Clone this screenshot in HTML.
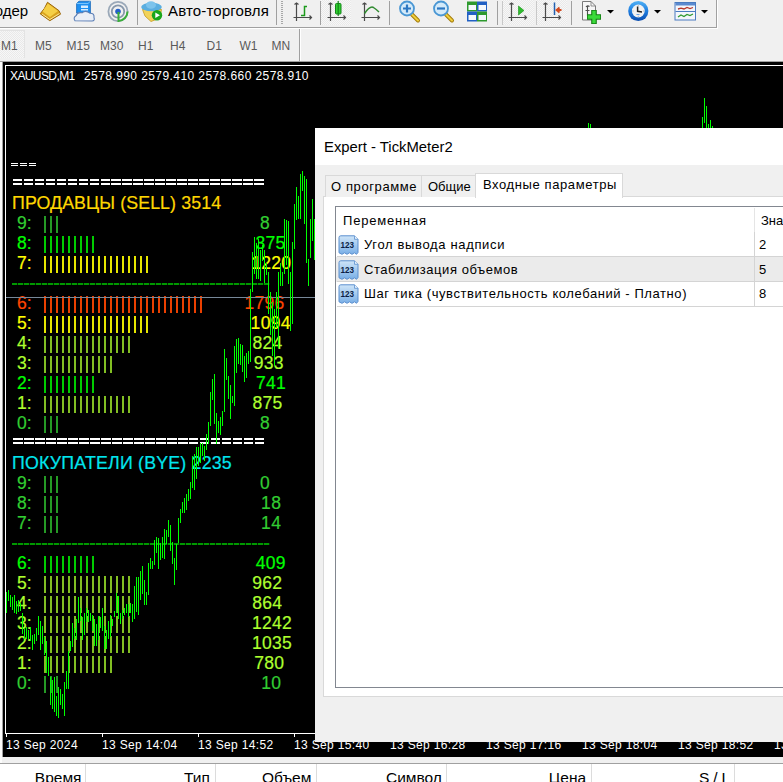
<!DOCTYPE html>
<html><head><meta charset="utf-8">
<style>
*{margin:0;padding:0;box-sizing:border-box}
html,body{width:783px;height:782px;overflow:hidden;background:#f0f0f0;font-family:"Liberation Sans",sans-serif;position:relative}
.a{position:absolute}
.vsep{position:absolute;width:1px;background:#a0a0a0}
.chk{position:absolute;background-color:#f7f7f7;background-image:linear-gradient(45deg,#e9e9e9 25%,transparent 25%,transparent 75%,#e9e9e9 75%),linear-gradient(45deg,#e9e9e9 25%,transparent 25%,transparent 75%,#e9e9e9 75%);background-size:2px 2px;background-position:0 0,1px 1px}
.tf{position:absolute;top:39px;font-size:12px;color:#5a5a5a;line-height:14px;white-space:pre}
.tl{position:absolute;top:738px;font-size:12px;color:#fff;line-height:14px;white-space:pre;letter-spacing:0.35px}
.tick{position:absolute;top:733px;width:1px;height:4px;background:#fff}
.lab{position:absolute;font-size:17.5px;line-height:17px;white-space:pre;-webkit-text-stroke:0.2px currentColor}
.pipe{position:absolute;width:2px;height:17px;opacity:0.75}
.hd{position:absolute;top:769.7px;font-size:15.5px;color:#000;line-height:16px;white-space:pre}
.csep{position:absolute;top:764px;width:1px;height:18px;background:#dcdcdc}
.dt{position:absolute;font-size:13px;color:#000;line-height:16px;white-space:pre}
</style></head><body>

<!-- ===== toolbar ===== -->
<div class="a" style="left:0;top:28px;width:718px;height:1px;background:#fff"></div>
<div class="a" style="left:717px;top:0;width:1px;height:29px;background:#fff"></div>
<div class="a" style="left:0;top:27px;width:717px;height:1px;background:#a0a0a0"></div>
<div class="a" style="left:716px;top:0;width:1px;height:28px;background:#a0a0a0"></div>
<div class="a" style="left:-17px;top:2px;font-size:15px;line-height:17px;color:#000;white-space:pre">Ордер</div>

<!-- book icon -->
<svg class="a" style="left:38px;top:0" width="26" height="24" viewBox="0 0 26 24">
<path d="M9.5 2.3 L21 10.7 L22.5 14.2 L11.8 20.7 L2.2 13.8 L6.4 8.4 Z" fill="#d9a21c" stroke="#9a6508" stroke-width="1"/>
<path d="M9.8 3.5 L20 11 L12 17 L4.5 11.5 Z" fill="#f5cf45"/>
<path d="M4 14 L11.8 19.5 L21.5 13.5" fill="none" stroke="#fbe9a0" stroke-width="1"/>
</svg>
<!-- server cloud -->
<svg class="a" style="left:72px;top:0" width="26" height="24" viewBox="0 0 26 24">
<path d="M4.6 3.5 L7 1.2 H18.4 V13 H4.6 Z" fill="#1e8ff0" stroke="#1566b8" stroke-width="0.8"/>
<path d="M4.6 3.5 H16 L18.4 1.2" fill="none" stroke="#8fd0ff" stroke-width="0.8"/>
<rect x="9" y="5.5" width="7" height="2.5" fill="#d5ecff"/>
<rect x="9" y="9" width="7" height="1.5" fill="#d5ecff"/>
<path d="M3 20.8 Q0.8 17.5 4.2 15.6 Q5 11.8 10 12.8 Q14 9.8 17.8 13.2 Q22.5 13 22 17.5 Q23.2 20.8 20 21 Z" fill="#e9eef6" stroke="#5a7db5" stroke-width="1.1"/>
</svg>
<!-- signal -->
<svg class="a" style="left:106px;top:0" width="26" height="24" viewBox="0 0 26 24">
<circle cx="12" cy="11.5" r="9.6" fill="none" stroke="#9aa8b8" stroke-width="1.8"/>
<circle cx="12" cy="11.5" r="6.2" fill="none" stroke="#8797ab" stroke-width="1.8"/>
<circle cx="12" cy="11.5" r="2.8" fill="#2360c8"/>
<path d="M12.5 12 V21 A9.5 9.5 0 0 0 21.5 11.5" fill="none" stroke="#3aae3a" stroke-width="2"/>
</svg>

<!-- auto trading button -->
<div class="a" style="left:137px;top:0;width:1px;height:25px;background:#a0a0a0"></div>
<div class="a" style="left:276px;top:0;width:1px;height:25px;background:#a0a0a0"></div>
<svg class="a" style="left:139px;top:0" width="26" height="24" viewBox="0 0 26 24">
<path d="M3.5 9.5 L6 16 L12 21.5 L21 18 L22.5 9.5 Z" fill="#f2d35a" stroke="#c49a1e" stroke-width="0.8"/>
<ellipse cx="12.5" cy="7" rx="10.3" ry="4.3" fill="#5aaee0"/>
<ellipse cx="12" cy="5" rx="5" ry="3.8" fill="#7cc3ec"/>
<circle cx="18" cy="15.3" r="5.2" fill="#1aa61a"/>
<path d="M16.3 12.5 L21 15.3 L16.3 18.1 Z" fill="#fff"/>
</svg>
<div class="a" style="left:168px;top:2px;font-size:15px;line-height:17px;color:#000;white-space:pre;letter-spacing:0.15px">Авто-торговля</div>
<!-- gripper -->
<div class="a" style="left:281px;top:1px;width:2px;height:24px;background:repeating-linear-gradient(#a8a8a8 0 1px,#f0f0f0 1px 2px)"></div>

<!-- chart type buttons -->
<div class="chk" style="left:321px;top:0;width:30px;height:25px"></div>
<svg class="a" style="left:290px;top:0" width="100" height="25" viewBox="0 0 100 25">
 <g stroke="#4a4a4a" stroke-width="1.2" fill="none">
  <path d="M6.5 3.5 V21 M3.5 17.5 H21 M4.5 4.5 L6.5 3 L8.5 4.5 M19.5 15.5 L21.5 17.5 L19.5 19.5"/>
  <path d="M40.5 3.5 V21 M37.5 17.5 H55 M38.5 4.5 L40.5 3 L42.5 4.5 M53.5 15.5 L55.5 17.5 L53.5 19.5"/>
  <path d="M74.5 3.5 V21 M71.5 17.5 H89 M72.5 4.5 L74.5 3 L76.5 4.5 M87.5 15.5 L89.5 17.5 L87.5 19.5"/>
 </g>
 <path d="M11 15.5 H14.5 V6.5 H17" fill="none" stroke="#1c9a1c" stroke-width="1.5"/>
 <rect x="45.5" y="3.5" width="5.5" height="10.5" rx="1" fill="#2fcf2f" stroke="#14861a"/>
 <path d="M48.2 1 V16" stroke="#14861a" stroke-width="1.2"/>
 <path d="M74.5 13.5 Q80 5.5 83.5 7.5 Q86.5 9.5 89 12" fill="none" stroke="#2f8a2f" stroke-width="1.5"/>
</svg>
<div class="vsep" style="left:320px;top:1px;height:24px"></div>
<div class="vsep" style="left:389px;top:1px;height:24px"></div>

<!-- zoom icons -->
<svg class="a" style="left:396px;top:0" width="100" height="25" viewBox="0 0 100 25">
 <path d="M16 14.5 L22 20.5" stroke="#a47c0c" stroke-width="4" stroke-linecap="round"/>
 <path d="M16 14.5 L22 20.5" stroke="#f0cf3c" stroke-width="2" stroke-linecap="round"/>
 <circle cx="11" cy="8.5" r="7" fill="#d4eaf9" stroke="#4a97d4" stroke-width="1.8"/>
 <path d="M11 4.5 V12.5 M7 8.5 H15" stroke="#2c77c2" stroke-width="2.2"/>
 <path d="M50 14.5 L56 20.5" stroke="#a47c0c" stroke-width="4" stroke-linecap="round"/>
 <path d="M50 14.5 L56 20.5" stroke="#f0cf3c" stroke-width="2" stroke-linecap="round"/>
 <circle cx="45" cy="8.5" r="7" fill="#d4eaf9" stroke="#4a97d4" stroke-width="1.8"/>
 <path d="M41 8.5 H49" stroke="#2c77c2" stroke-width="2.2"/>
 <rect x="71" y="1.5" width="10" height="10" fill="#2e9a2e"/>
 <rect x="81" y="1.5" width="10" height="10" fill="#2160c4"/>
 <rect x="71" y="11.5" width="10" height="10" fill="#2160c4"/>
 <rect x="81" y="11.5" width="10" height="10" fill="#2e9a2e"/>
 <g fill="#f4f8fc"><rect x="72.5" y="5" width="7.5" height="5"/><rect x="82.5" y="5" width="7.5" height="5"/><rect x="72.5" y="15" width="7.5" height="5"/><rect x="82.5" y="15" width="7.5" height="5"/></g>
</svg>
<div class="vsep" style="left:497px;top:1px;height:24px"></div>
<div class="chk" style="left:502px;top:0;width:32px;height:25px"></div>
<div class="chk" style="left:536px;top:0;width:31px;height:25px"></div>
<div class="vsep" style="left:502px;top:1px;height:24px;background:#c8c8c8"></div>
<div class="vsep" style="left:536px;top:1px;height:24px;background:#c8c8c8"></div>
<svg class="a" style="left:505px;top:0" width="62" height="25" viewBox="0 0 62 25">
 <g stroke="#4a4a4a" stroke-width="1.2" fill="none">
  <path d="M6.5 3.5 V21 M3.5 17.5 H21 M4.5 4.5 L6.5 3 L8.5 4.5 M19.5 15.5 L21.5 17.5 L19.5 19.5"/>
  <path d="M40.5 3.5 V21 M37.5 17.5 H55 M38.5 4.5 L40.5 3 L42.5 4.5 M53.5 15.5 L55.5 17.5 L53.5 19.5"/>
 </g>
 <path d="M13.5 6 L19 10.5 L13.5 15 Z" fill="#2dbd2d" stroke="#1a8f1a" stroke-width="0.6"/>
 <path d="M49.5 2.5 V15" stroke="#2160b0" stroke-width="1.5"/>
 <path d="M56.5 10 H52 M54.5 7.5 L51.5 10 L54.5 12.5" stroke="#d2491e" stroke-width="1.8" fill="none"/>
</svg>
<div class="vsep" style="left:571px;top:1px;height:24px"></div>

<!-- indicators / clock / templates -->
<svg class="a" style="left:580px;top:0" width="135" height="25" viewBox="0 0 135 25">
 <path d="M2.5 1.5 H11 L15.5 6 V20 H2.5 Z" fill="#f6f6f6" stroke="#7a7a7a" stroke-width="1"/>
 <path d="M11 1.5 V6 H15.5" fill="none" stroke="#7a7a7a" stroke-width="0.8"/>
 <path d="M6 7 Q7.5 5 9.5 6.5 M7.5 6 V16 M5.5 10.5 H9.5" stroke="#505050" fill="none" stroke-width="1.1"/>
 <path d="M14 10 V24 M7 17 H21" stroke="#127d12" stroke-width="5.6"/>
 <path d="M14 10.8 V23.2 M7.8 17 H20.2" stroke="#3ada3a" stroke-width="3.4"/>
 <path d="M27 10 H34 L30.5 13.5 Z" fill="#000"/>
 <defs><linearGradient id="clk" x1="0" y1="0" x2="0" y2="1"><stop offset="0" stop-color="#52b2f5"/><stop offset="0.5" stop-color="#1f7ee0"/><stop offset="1" stop-color="#0a4cae"/></linearGradient></defs>
 <circle cx="58.3" cy="11" r="10.1" fill="url(#clk)"/>
 <circle cx="58.3" cy="11" r="6.4" fill="#f2f2f2"/>
 <g stroke="#9a9a9a" stroke-width="0.8"><path d="M58.3 5.2 V6.2 M58.3 15.8 V16.8 M52.5 11 H53.5 M63.1 11 H64.1"/></g>
 <path d="M57.6 6.5 V11.3 L62 12" stroke="#222" stroke-width="1.5" fill="none"/>
 <path d="M56.5 14.5 H59.5" stroke="#4a90e0" stroke-width="0.8"/>
 <path d="M74 10 H81 L77.5 13.5 Z" fill="#000"/>
 <rect x="95" y="2.5" width="20.5" height="17.5" fill="#f3f6fb" stroke="#4a7bc0"/>
 <rect x="95.5" y="3" width="19.5" height="2.5" fill="#5a8ad0"/>
 <path d="M95.5 11.5 H115" stroke="#4a7bc0"/>
 <path d="M98 9 L101 8.2 L104 9 L107 7.5 L110 8.5 L113 7.5" stroke="#b8372a" stroke-width="1.3" fill="none"/>
 <path d="M98 17 L101 15 L104 16.5 L107 14.5 L110 15.5 L113 14" stroke="#2e9a2e" stroke-width="1.3" fill="none"/>
 <path d="M121 10 H128 L124.5 13.5 Z" fill="#000"/>
</svg>

<!-- ===== timeframe bar ===== -->
<div class="chk" style="left:0;top:30px;width:25px;height:28px;border-right:1px solid #e3e3e3;border-top:1px solid #e3e3e3"></div>
<div class="tf" style="left:1px">M1</div><div class="tf" style="left:35px">M5</div><div class="tf" style="left:66.5px">M15</div><div class="tf" style="left:100px">M30</div><div class="tf" style="left:138px">H1</div><div class="tf" style="left:170px">H4</div><div class="tf" style="left:206.5px">D1</div><div class="tf" style="left:239.5px">W1</div><div class="tf" style="left:271.5px">MN</div>
<div class="a" style="left:299px;top:29px;width:1px;height:32px;background:#a0a0a0"></div>
<div class="a" style="left:300px;top:29px;width:1px;height:32px;background:#fff"></div>

<!-- ===== chart ===== -->
<div class="a" style="left:0;top:61px;width:783px;height:1px;background:#a0a0a0"></div>
<div class="a" style="left:0;top:62px;width:2px;height:702px;background:#fcfcfc"></div>
<div class="a" style="left:2px;top:62px;width:1px;height:695px;background:#a0a0a0"></div>
<div class="a" style="left:3px;top:62px;width:780px;height:695px;background:#000"></div>
<div class="a" style="left:5px;top:65px;width:790px;height:669px;border:1px solid #fff"></div>
<div class="a" style="left:10px;top:69px;font-size:12px;line-height:14px;color:#fff;white-space:pre;letter-spacing:-0.6px">XAUUSD,M1</div><div class="a" style="left:84px;top:69px;font-size:12px;line-height:14px;color:#fff;white-space:pre;letter-spacing:0.42px">2578.990 2579.410 2578.660 2578.910</div>
<div class="tl" style="left:6px">13 Sep 2024</div><div class="tick" style="left:6px"></div><div class="tl" style="left:102px">13 Sep 14:04</div><div class="tick" style="left:102px"></div><div class="tl" style="left:198px">13 Sep 14:52</div><div class="tick" style="left:198px"></div><div class="tl" style="left:294px">13 Sep 15:40</div><div class="tick" style="left:294px"></div><div class="tl" style="left:390px">13 Sep 16:28</div><div class="tick" style="left:390px"></div><div class="tl" style="left:486px">13 Sep 17:16</div><div class="tick" style="left:486px"></div><div class="tl" style="left:582px">13 Sep 18:04</div><div class="tick" style="left:582px"></div><div class="tl" style="left:678px">13 Sep 18:52</div><div class="tick" style="left:678px"></div><div class="tl" style="left:774px">13 Sep 19:40</div><div class="tick" style="left:774px"></div>



<!-- indicator -->
<div style="position:absolute;left:11.0px;top:163px;width:7px;height:1px;background:#fff"></div>
<div style="position:absolute;left:11.0px;top:165px;width:7px;height:1px;background:#fff"></div>
<div style="position:absolute;left:20.0px;top:163px;width:7px;height:1px;background:#fff"></div>
<div style="position:absolute;left:20.0px;top:165px;width:7px;height:1px;background:#fff"></div>
<div style="position:absolute;left:29.0px;top:163px;width:7px;height:1px;background:#fff"></div>
<div style="position:absolute;left:29.0px;top:165px;width:7px;height:1px;background:#fff"></div>
<div style="position:absolute;left:12.7px;top:179px;width:9.6px;height:2px;background:#fff"></div>
<div style="position:absolute;left:12.7px;top:183px;width:9.6px;height:2px;background:#fff"></div>
<div style="position:absolute;left:23.7px;top:179px;width:9.6px;height:2px;background:#fff"></div>
<div style="position:absolute;left:23.7px;top:183px;width:9.6px;height:2px;background:#fff"></div>
<div style="position:absolute;left:34.6px;top:179px;width:9.6px;height:2px;background:#fff"></div>
<div style="position:absolute;left:34.6px;top:183px;width:9.6px;height:2px;background:#fff"></div>
<div style="position:absolute;left:45.6px;top:179px;width:9.6px;height:2px;background:#fff"></div>
<div style="position:absolute;left:45.6px;top:183px;width:9.6px;height:2px;background:#fff"></div>
<div style="position:absolute;left:56.6px;top:179px;width:9.6px;height:2px;background:#fff"></div>
<div style="position:absolute;left:56.6px;top:183px;width:9.6px;height:2px;background:#fff"></div>
<div style="position:absolute;left:67.5px;top:179px;width:9.6px;height:2px;background:#fff"></div>
<div style="position:absolute;left:67.5px;top:183px;width:9.6px;height:2px;background:#fff"></div>
<div style="position:absolute;left:78.5px;top:179px;width:9.6px;height:2px;background:#fff"></div>
<div style="position:absolute;left:78.5px;top:183px;width:9.6px;height:2px;background:#fff"></div>
<div style="position:absolute;left:89.5px;top:179px;width:9.6px;height:2px;background:#fff"></div>
<div style="position:absolute;left:89.5px;top:183px;width:9.6px;height:2px;background:#fff"></div>
<div style="position:absolute;left:100.5px;top:179px;width:9.6px;height:2px;background:#fff"></div>
<div style="position:absolute;left:100.5px;top:183px;width:9.6px;height:2px;background:#fff"></div>
<div style="position:absolute;left:111.4px;top:179px;width:9.6px;height:2px;background:#fff"></div>
<div style="position:absolute;left:111.4px;top:183px;width:9.6px;height:2px;background:#fff"></div>
<div style="position:absolute;left:122.4px;top:179px;width:9.6px;height:2px;background:#fff"></div>
<div style="position:absolute;left:122.4px;top:183px;width:9.6px;height:2px;background:#fff"></div>
<div style="position:absolute;left:133.4px;top:179px;width:9.6px;height:2px;background:#fff"></div>
<div style="position:absolute;left:133.4px;top:183px;width:9.6px;height:2px;background:#fff"></div>
<div style="position:absolute;left:144.3px;top:179px;width:9.6px;height:2px;background:#fff"></div>
<div style="position:absolute;left:144.3px;top:183px;width:9.6px;height:2px;background:#fff"></div>
<div style="position:absolute;left:155.3px;top:179px;width:9.6px;height:2px;background:#fff"></div>
<div style="position:absolute;left:155.3px;top:183px;width:9.6px;height:2px;background:#fff"></div>
<div style="position:absolute;left:166.3px;top:179px;width:9.6px;height:2px;background:#fff"></div>
<div style="position:absolute;left:166.3px;top:183px;width:9.6px;height:2px;background:#fff"></div>
<div style="position:absolute;left:177.2px;top:179px;width:9.6px;height:2px;background:#fff"></div>
<div style="position:absolute;left:177.2px;top:183px;width:9.6px;height:2px;background:#fff"></div>
<div style="position:absolute;left:188.2px;top:179px;width:9.6px;height:2px;background:#fff"></div>
<div style="position:absolute;left:188.2px;top:183px;width:9.6px;height:2px;background:#fff"></div>
<div style="position:absolute;left:199.2px;top:179px;width:9.6px;height:2px;background:#fff"></div>
<div style="position:absolute;left:199.2px;top:183px;width:9.6px;height:2px;background:#fff"></div>
<div style="position:absolute;left:210.2px;top:179px;width:9.6px;height:2px;background:#fff"></div>
<div style="position:absolute;left:210.2px;top:183px;width:9.6px;height:2px;background:#fff"></div>
<div style="position:absolute;left:221.1px;top:179px;width:9.6px;height:2px;background:#fff"></div>
<div style="position:absolute;left:221.1px;top:183px;width:9.6px;height:2px;background:#fff"></div>
<div style="position:absolute;left:232.1px;top:179px;width:9.6px;height:2px;background:#fff"></div>
<div style="position:absolute;left:232.1px;top:183px;width:9.6px;height:2px;background:#fff"></div>
<div style="position:absolute;left:243.1px;top:179px;width:9.6px;height:2px;background:#fff"></div>
<div style="position:absolute;left:243.1px;top:183px;width:9.6px;height:2px;background:#fff"></div>
<div style="position:absolute;left:254.0px;top:179px;width:9.6px;height:2px;background:#fff"></div>
<div style="position:absolute;left:254.0px;top:183px;width:9.6px;height:2px;background:#fff"></div>
<div class="a" style="left:12px;top:195px;font-size:17.8px;line-height:17px;color:#ffd700;white-space:pre;letter-spacing:0.1px;-webkit-text-stroke:0.2px #ffd700">ПРОДАВЦЫ (SELL) 3514</div>
<div class="lab" style="left:17px;top:215px;color:#32cd32">9:</div>
<div class="pipe" style="left:44px;top:216px;background:#32cd32;opacity:0.75"></div>
<div class="pipe" style="left:50px;top:216px;background:#32cd32;opacity:0.75"></div>
<div class="pipe" style="left:56px;top:216px;background:#32cd32;opacity:0.75"></div>
<div class="lab" style="left:260.1px;top:215px;color:#32cd32;letter-spacing:0.3px">8</div>
<div class="lab" style="left:17px;top:235px;color:#00ff00">8:</div>
<div class="pipe" style="left:44px;top:236px;background:#00ff00;opacity:0.8"></div>
<div class="pipe" style="left:50px;top:236px;background:#00ff00;opacity:0.8"></div>
<div class="pipe" style="left:56px;top:236px;background:#00ff00;opacity:0.8"></div>
<div class="pipe" style="left:62px;top:236px;background:#00ff00;opacity:0.8"></div>
<div class="pipe" style="left:68px;top:236px;background:#00ff00;opacity:0.8"></div>
<div class="pipe" style="left:74px;top:236px;background:#00ff00;opacity:0.8"></div>
<div class="pipe" style="left:80px;top:236px;background:#00ff00;opacity:0.8"></div>
<div class="pipe" style="left:86px;top:236px;background:#00ff00;opacity:0.8"></div>
<div class="pipe" style="left:92px;top:236px;background:#00ff00;opacity:0.8"></div>
<div class="lab" style="left:255.5px;top:235px;color:#00ff00;letter-spacing:0.3px">375</div>
<div class="lab" style="left:17px;top:255px;color:#ffff00">7:</div>
<div class="pipe" style="left:44px;top:256px;background:#ffff00;opacity:0.9"></div>
<div class="pipe" style="left:50px;top:256px;background:#ffff00;opacity:0.9"></div>
<div class="pipe" style="left:56px;top:256px;background:#ffff00;opacity:0.9"></div>
<div class="pipe" style="left:62px;top:256px;background:#ffff00;opacity:0.9"></div>
<div class="pipe" style="left:68px;top:256px;background:#ffff00;opacity:0.9"></div>
<div class="pipe" style="left:74px;top:256px;background:#ffff00;opacity:0.9"></div>
<div class="pipe" style="left:80px;top:256px;background:#ffff00;opacity:0.9"></div>
<div class="pipe" style="left:86px;top:256px;background:#ffff00;opacity:0.9"></div>
<div class="pipe" style="left:92px;top:256px;background:#ffff00;opacity:0.9"></div>
<div class="pipe" style="left:98px;top:256px;background:#ffff00;opacity:0.9"></div>
<div class="pipe" style="left:104px;top:256px;background:#ffff00;opacity:0.9"></div>
<div class="pipe" style="left:110px;top:256px;background:#ffff00;opacity:0.9"></div>
<div class="pipe" style="left:116px;top:256px;background:#ffff00;opacity:0.9"></div>
<div class="pipe" style="left:122px;top:256px;background:#ffff00;opacity:0.9"></div>
<div class="pipe" style="left:128px;top:256px;background:#ffff00;opacity:0.9"></div>
<div class="pipe" style="left:134px;top:256px;background:#ffff00;opacity:0.9"></div>
<div class="pipe" style="left:140px;top:256px;background:#ffff00;opacity:0.9"></div>
<div class="pipe" style="left:146px;top:256px;background:#ffff00;opacity:0.9"></div>
<div class="lab" style="left:251.2px;top:255px;color:#ffff00;letter-spacing:0.3px">1220</div>
<div class="lab" style="left:17px;top:295px;color:#ff4500">6:</div>
<div class="pipe" style="left:44px;top:296px;background:#ff4500;opacity:0.92"></div>
<div class="pipe" style="left:50px;top:296px;background:#ff4500;opacity:0.92"></div>
<div class="pipe" style="left:56px;top:296px;background:#ff4500;opacity:0.92"></div>
<div class="pipe" style="left:62px;top:296px;background:#ff4500;opacity:0.92"></div>
<div class="pipe" style="left:68px;top:296px;background:#ff4500;opacity:0.92"></div>
<div class="pipe" style="left:74px;top:296px;background:#ff4500;opacity:0.92"></div>
<div class="pipe" style="left:80px;top:296px;background:#ff4500;opacity:0.92"></div>
<div class="pipe" style="left:86px;top:296px;background:#ff4500;opacity:0.92"></div>
<div class="pipe" style="left:92px;top:296px;background:#ff4500;opacity:0.92"></div>
<div class="pipe" style="left:98px;top:296px;background:#ff4500;opacity:0.92"></div>
<div class="pipe" style="left:104px;top:296px;background:#ff4500;opacity:0.92"></div>
<div class="pipe" style="left:110px;top:296px;background:#ff4500;opacity:0.92"></div>
<div class="pipe" style="left:116px;top:296px;background:#ff4500;opacity:0.92"></div>
<div class="pipe" style="left:122px;top:296px;background:#ff4500;opacity:0.92"></div>
<div class="pipe" style="left:128px;top:296px;background:#ff4500;opacity:0.92"></div>
<div class="pipe" style="left:134px;top:296px;background:#ff4500;opacity:0.92"></div>
<div class="pipe" style="left:140px;top:296px;background:#ff4500;opacity:0.92"></div>
<div class="pipe" style="left:146px;top:296px;background:#ff4500;opacity:0.92"></div>
<div class="pipe" style="left:152px;top:296px;background:#ff4500;opacity:0.92"></div>
<div class="pipe" style="left:158px;top:296px;background:#ff4500;opacity:0.92"></div>
<div class="pipe" style="left:164px;top:296px;background:#ff4500;opacity:0.92"></div>
<div class="pipe" style="left:170px;top:296px;background:#ff4500;opacity:0.92"></div>
<div class="pipe" style="left:176px;top:296px;background:#ff4500;opacity:0.92"></div>
<div class="pipe" style="left:182px;top:296px;background:#ff4500;opacity:0.92"></div>
<div class="pipe" style="left:188px;top:296px;background:#ff4500;opacity:0.92"></div>
<div class="pipe" style="left:194px;top:296px;background:#ff4500;opacity:0.92"></div>
<div class="pipe" style="left:200px;top:296px;background:#ff4500;opacity:0.92"></div>
<div class="lab" style="left:244.4px;top:295px;color:#ff4500;letter-spacing:0.3px">1796</div>
<div class="lab" style="left:17px;top:315px;color:#ffff00">5:</div>
<div class="pipe" style="left:44px;top:316px;background:#ffff00;opacity:0.9"></div>
<div class="pipe" style="left:50px;top:316px;background:#ffff00;opacity:0.9"></div>
<div class="pipe" style="left:56px;top:316px;background:#ffff00;opacity:0.9"></div>
<div class="pipe" style="left:62px;top:316px;background:#ffff00;opacity:0.9"></div>
<div class="pipe" style="left:68px;top:316px;background:#ffff00;opacity:0.9"></div>
<div class="pipe" style="left:74px;top:316px;background:#ffff00;opacity:0.9"></div>
<div class="pipe" style="left:80px;top:316px;background:#ffff00;opacity:0.9"></div>
<div class="pipe" style="left:86px;top:316px;background:#ffff00;opacity:0.9"></div>
<div class="pipe" style="left:92px;top:316px;background:#ffff00;opacity:0.9"></div>
<div class="pipe" style="left:98px;top:316px;background:#ffff00;opacity:0.9"></div>
<div class="pipe" style="left:104px;top:316px;background:#ffff00;opacity:0.9"></div>
<div class="pipe" style="left:110px;top:316px;background:#ffff00;opacity:0.9"></div>
<div class="pipe" style="left:116px;top:316px;background:#ffff00;opacity:0.9"></div>
<div class="pipe" style="left:122px;top:316px;background:#ffff00;opacity:0.9"></div>
<div class="pipe" style="left:128px;top:316px;background:#ffff00;opacity:0.9"></div>
<div class="pipe" style="left:134px;top:316px;background:#ffff00;opacity:0.9"></div>
<div class="pipe" style="left:140px;top:316px;background:#ffff00;opacity:0.9"></div>
<div class="pipe" style="left:146px;top:316px;background:#ffff00;opacity:0.9"></div>
<div class="lab" style="left:250.6px;top:315px;color:#ffff00;letter-spacing:0.3px">1094</div>
<div class="lab" style="left:17px;top:335px;color:#adff2f">4:</div>
<div class="pipe" style="left:44px;top:336px;background:#adff2f;opacity:0.75"></div>
<div class="pipe" style="left:50px;top:336px;background:#adff2f;opacity:0.75"></div>
<div class="pipe" style="left:56px;top:336px;background:#adff2f;opacity:0.75"></div>
<div class="pipe" style="left:62px;top:336px;background:#adff2f;opacity:0.75"></div>
<div class="pipe" style="left:68px;top:336px;background:#adff2f;opacity:0.75"></div>
<div class="pipe" style="left:74px;top:336px;background:#adff2f;opacity:0.75"></div>
<div class="pipe" style="left:80px;top:336px;background:#adff2f;opacity:0.75"></div>
<div class="pipe" style="left:86px;top:336px;background:#adff2f;opacity:0.75"></div>
<div class="pipe" style="left:92px;top:336px;background:#adff2f;opacity:0.75"></div>
<div class="pipe" style="left:98px;top:336px;background:#adff2f;opacity:0.75"></div>
<div class="pipe" style="left:104px;top:336px;background:#adff2f;opacity:0.75"></div>
<div class="pipe" style="left:110px;top:336px;background:#adff2f;opacity:0.75"></div>
<div class="pipe" style="left:116px;top:336px;background:#adff2f;opacity:0.75"></div>
<div class="pipe" style="left:122px;top:336px;background:#adff2f;opacity:0.75"></div>
<div class="pipe" style="left:128px;top:336px;background:#adff2f;opacity:0.75"></div>
<div class="lab" style="left:252.4px;top:335px;color:#adff2f;letter-spacing:0.3px">824</div>
<div class="lab" style="left:17px;top:355px;color:#adff2f">3:</div>
<div class="pipe" style="left:44px;top:356px;background:#adff2f;opacity:0.75"></div>
<div class="pipe" style="left:50px;top:356px;background:#adff2f;opacity:0.75"></div>
<div class="pipe" style="left:56px;top:356px;background:#adff2f;opacity:0.75"></div>
<div class="pipe" style="left:62px;top:356px;background:#adff2f;opacity:0.75"></div>
<div class="pipe" style="left:68px;top:356px;background:#adff2f;opacity:0.75"></div>
<div class="pipe" style="left:74px;top:356px;background:#adff2f;opacity:0.75"></div>
<div class="pipe" style="left:80px;top:356px;background:#adff2f;opacity:0.75"></div>
<div class="pipe" style="left:86px;top:356px;background:#adff2f;opacity:0.75"></div>
<div class="pipe" style="left:92px;top:356px;background:#adff2f;opacity:0.75"></div>
<div class="pipe" style="left:98px;top:356px;background:#adff2f;opacity:0.75"></div>
<div class="pipe" style="left:104px;top:356px;background:#adff2f;opacity:0.75"></div>
<div class="pipe" style="left:110px;top:356px;background:#adff2f;opacity:0.75"></div>
<div class="lab" style="left:253.8px;top:355px;color:#adff2f;letter-spacing:0.3px">933</div>
<div class="lab" style="left:17px;top:375px;color:#00ff00">2:</div>
<div class="pipe" style="left:44px;top:376px;background:#00ff00;opacity:0.8"></div>
<div class="pipe" style="left:50px;top:376px;background:#00ff00;opacity:0.8"></div>
<div class="pipe" style="left:56px;top:376px;background:#00ff00;opacity:0.8"></div>
<div class="pipe" style="left:62px;top:376px;background:#00ff00;opacity:0.8"></div>
<div class="pipe" style="left:68px;top:376px;background:#00ff00;opacity:0.8"></div>
<div class="pipe" style="left:74px;top:376px;background:#00ff00;opacity:0.8"></div>
<div class="pipe" style="left:80px;top:376px;background:#00ff00;opacity:0.8"></div>
<div class="pipe" style="left:86px;top:376px;background:#00ff00;opacity:0.8"></div>
<div class="pipe" style="left:92px;top:376px;background:#00ff00;opacity:0.8"></div>
<div class="lab" style="left:255.9px;top:375px;color:#00ff00;letter-spacing:0.3px">741</div>
<div class="lab" style="left:17px;top:395px;color:#adff2f">1:</div>
<div class="pipe" style="left:44px;top:396px;background:#adff2f;opacity:0.75"></div>
<div class="pipe" style="left:50px;top:396px;background:#adff2f;opacity:0.75"></div>
<div class="pipe" style="left:56px;top:396px;background:#adff2f;opacity:0.75"></div>
<div class="pipe" style="left:62px;top:396px;background:#adff2f;opacity:0.75"></div>
<div class="pipe" style="left:68px;top:396px;background:#adff2f;opacity:0.75"></div>
<div class="pipe" style="left:74px;top:396px;background:#adff2f;opacity:0.75"></div>
<div class="pipe" style="left:80px;top:396px;background:#adff2f;opacity:0.75"></div>
<div class="pipe" style="left:86px;top:396px;background:#adff2f;opacity:0.75"></div>
<div class="pipe" style="left:92px;top:396px;background:#adff2f;opacity:0.75"></div>
<div class="pipe" style="left:98px;top:396px;background:#adff2f;opacity:0.75"></div>
<div class="pipe" style="left:104px;top:396px;background:#adff2f;opacity:0.75"></div>
<div class="pipe" style="left:110px;top:396px;background:#adff2f;opacity:0.75"></div>
<div class="pipe" style="left:116px;top:396px;background:#adff2f;opacity:0.75"></div>
<div class="pipe" style="left:122px;top:396px;background:#adff2f;opacity:0.75"></div>
<div class="pipe" style="left:128px;top:396px;background:#adff2f;opacity:0.75"></div>
<div class="lab" style="left:252.4px;top:395px;color:#adff2f;letter-spacing:0.3px">875</div>
<div class="lab" style="left:17px;top:415px;color:#32cd32">0:</div>
<div class="pipe" style="left:44px;top:416px;background:#32cd32;opacity:0.75"></div>
<div class="pipe" style="left:50px;top:416px;background:#32cd32;opacity:0.75"></div>
<div class="pipe" style="left:56px;top:416px;background:#32cd32;opacity:0.75"></div>
<div class="lab" style="left:260.0px;top:415px;color:#32cd32;letter-spacing:0.3px">8</div>
<div class="a" style="left:12px;top:283px;width:258px;height:2px;background:repeating-linear-gradient(90deg,#009800 0 5px,#002800 5px 6px)"></div>
<div style="position:absolute;left:13.4px;top:438px;width:9.6px;height:2px;background:#fff"></div>
<div style="position:absolute;left:13.4px;top:442px;width:9.6px;height:2px;background:#fff"></div>
<div style="position:absolute;left:24.4px;top:438px;width:9.6px;height:2px;background:#fff"></div>
<div style="position:absolute;left:24.4px;top:442px;width:9.6px;height:2px;background:#fff"></div>
<div style="position:absolute;left:35.3px;top:438px;width:9.6px;height:2px;background:#fff"></div>
<div style="position:absolute;left:35.3px;top:442px;width:9.6px;height:2px;background:#fff"></div>
<div style="position:absolute;left:46.3px;top:438px;width:9.6px;height:2px;background:#fff"></div>
<div style="position:absolute;left:46.3px;top:442px;width:9.6px;height:2px;background:#fff"></div>
<div style="position:absolute;left:57.3px;top:438px;width:9.6px;height:2px;background:#fff"></div>
<div style="position:absolute;left:57.3px;top:442px;width:9.6px;height:2px;background:#fff"></div>
<div style="position:absolute;left:68.2px;top:438px;width:9.6px;height:2px;background:#fff"></div>
<div style="position:absolute;left:68.2px;top:442px;width:9.6px;height:2px;background:#fff"></div>
<div style="position:absolute;left:79.2px;top:438px;width:9.6px;height:2px;background:#fff"></div>
<div style="position:absolute;left:79.2px;top:442px;width:9.6px;height:2px;background:#fff"></div>
<div style="position:absolute;left:90.2px;top:438px;width:9.6px;height:2px;background:#fff"></div>
<div style="position:absolute;left:90.2px;top:442px;width:9.6px;height:2px;background:#fff"></div>
<div style="position:absolute;left:101.2px;top:438px;width:9.6px;height:2px;background:#fff"></div>
<div style="position:absolute;left:101.2px;top:442px;width:9.6px;height:2px;background:#fff"></div>
<div style="position:absolute;left:112.1px;top:438px;width:9.6px;height:2px;background:#fff"></div>
<div style="position:absolute;left:112.1px;top:442px;width:9.6px;height:2px;background:#fff"></div>
<div style="position:absolute;left:123.1px;top:438px;width:9.6px;height:2px;background:#fff"></div>
<div style="position:absolute;left:123.1px;top:442px;width:9.6px;height:2px;background:#fff"></div>
<div style="position:absolute;left:134.1px;top:438px;width:9.6px;height:2px;background:#fff"></div>
<div style="position:absolute;left:134.1px;top:442px;width:9.6px;height:2px;background:#fff"></div>
<div style="position:absolute;left:145.0px;top:438px;width:9.6px;height:2px;background:#fff"></div>
<div style="position:absolute;left:145.0px;top:442px;width:9.6px;height:2px;background:#fff"></div>
<div style="position:absolute;left:156.0px;top:438px;width:9.6px;height:2px;background:#fff"></div>
<div style="position:absolute;left:156.0px;top:442px;width:9.6px;height:2px;background:#fff"></div>
<div style="position:absolute;left:167.0px;top:438px;width:9.6px;height:2px;background:#fff"></div>
<div style="position:absolute;left:167.0px;top:442px;width:9.6px;height:2px;background:#fff"></div>
<div style="position:absolute;left:178.0px;top:438px;width:9.6px;height:2px;background:#fff"></div>
<div style="position:absolute;left:178.0px;top:442px;width:9.6px;height:2px;background:#fff"></div>
<div style="position:absolute;left:188.9px;top:438px;width:9.6px;height:2px;background:#fff"></div>
<div style="position:absolute;left:188.9px;top:442px;width:9.6px;height:2px;background:#fff"></div>
<div style="position:absolute;left:199.9px;top:438px;width:9.6px;height:2px;background:#fff"></div>
<div style="position:absolute;left:199.9px;top:442px;width:9.6px;height:2px;background:#fff"></div>
<div style="position:absolute;left:210.9px;top:438px;width:9.6px;height:2px;background:#fff"></div>
<div style="position:absolute;left:210.9px;top:442px;width:9.6px;height:2px;background:#fff"></div>
<div style="position:absolute;left:221.8px;top:438px;width:9.6px;height:2px;background:#fff"></div>
<div style="position:absolute;left:221.8px;top:442px;width:9.6px;height:2px;background:#fff"></div>
<div style="position:absolute;left:232.8px;top:438px;width:9.6px;height:2px;background:#fff"></div>
<div style="position:absolute;left:232.8px;top:442px;width:9.6px;height:2px;background:#fff"></div>
<div style="position:absolute;left:243.8px;top:438px;width:9.6px;height:2px;background:#fff"></div>
<div style="position:absolute;left:243.8px;top:442px;width:9.6px;height:2px;background:#fff"></div>
<div style="position:absolute;left:254.7px;top:438px;width:9.6px;height:2px;background:#fff"></div>
<div style="position:absolute;left:254.7px;top:442px;width:9.6px;height:2px;background:#fff"></div>
<div class="a" style="left:12px;top:455px;font-size:17.8px;line-height:17px;color:#00e5ee;white-space:pre;letter-spacing:0.2px;-webkit-text-stroke:0.2px #00e5ee">ПОКУПАТЕЛИ (BYE) 2235</div>
<div class="lab" style="left:17px;top:475px;color:#32cd32">9:</div>
<div class="pipe" style="left:44px;top:476px;background:#32cd32;opacity:0.75"></div>
<div class="pipe" style="left:50px;top:476px;background:#32cd32;opacity:0.75"></div>
<div class="pipe" style="left:56px;top:476px;background:#32cd32;opacity:0.75"></div>
<div class="lab" style="left:259.9px;top:475px;color:#32cd32;letter-spacing:0.3px">0</div>
<div class="lab" style="left:17px;top:495px;color:#32cd32">8:</div>
<div class="pipe" style="left:44px;top:496px;background:#32cd32;opacity:0.75"></div>
<div class="pipe" style="left:50px;top:496px;background:#32cd32;opacity:0.75"></div>
<div class="pipe" style="left:56px;top:496px;background:#32cd32;opacity:0.75"></div>
<div class="lab" style="left:261.1px;top:495px;color:#32cd32;letter-spacing:0.3px">18</div>
<div class="lab" style="left:17px;top:515px;color:#32cd32">7:</div>
<div class="pipe" style="left:44px;top:516px;background:#32cd32;opacity:0.75"></div>
<div class="pipe" style="left:50px;top:516px;background:#32cd32;opacity:0.75"></div>
<div class="pipe" style="left:56px;top:516px;background:#32cd32;opacity:0.75"></div>
<div class="lab" style="left:261.1px;top:515px;color:#32cd32;letter-spacing:0.3px">14</div>
<div class="lab" style="left:17px;top:555px;color:#00ff00">6:</div>
<div class="pipe" style="left:44px;top:556px;background:#00ff00;opacity:0.8"></div>
<div class="pipe" style="left:50px;top:556px;background:#00ff00;opacity:0.8"></div>
<div class="pipe" style="left:56px;top:556px;background:#00ff00;opacity:0.8"></div>
<div class="pipe" style="left:62px;top:556px;background:#00ff00;opacity:0.8"></div>
<div class="pipe" style="left:68px;top:556px;background:#00ff00;opacity:0.8"></div>
<div class="pipe" style="left:74px;top:556px;background:#00ff00;opacity:0.8"></div>
<div class="pipe" style="left:80px;top:556px;background:#00ff00;opacity:0.8"></div>
<div class="pipe" style="left:86px;top:556px;background:#00ff00;opacity:0.8"></div>
<div class="pipe" style="left:92px;top:556px;background:#00ff00;opacity:0.8"></div>
<div class="lab" style="left:255.8px;top:555px;color:#00ff00;letter-spacing:0.3px">409</div>
<div class="lab" style="left:17px;top:575px;color:#adff2f">5:</div>
<div class="pipe" style="left:44px;top:576px;background:#adff2f;opacity:0.75"></div>
<div class="pipe" style="left:50px;top:576px;background:#adff2f;opacity:0.75"></div>
<div class="pipe" style="left:56px;top:576px;background:#adff2f;opacity:0.75"></div>
<div class="pipe" style="left:62px;top:576px;background:#adff2f;opacity:0.75"></div>
<div class="pipe" style="left:68px;top:576px;background:#adff2f;opacity:0.75"></div>
<div class="pipe" style="left:74px;top:576px;background:#adff2f;opacity:0.75"></div>
<div class="pipe" style="left:80px;top:576px;background:#adff2f;opacity:0.75"></div>
<div class="pipe" style="left:86px;top:576px;background:#adff2f;opacity:0.75"></div>
<div class="pipe" style="left:92px;top:576px;background:#adff2f;opacity:0.75"></div>
<div class="pipe" style="left:98px;top:576px;background:#adff2f;opacity:0.75"></div>
<div class="pipe" style="left:104px;top:576px;background:#adff2f;opacity:0.75"></div>
<div class="pipe" style="left:110px;top:576px;background:#adff2f;opacity:0.75"></div>
<div class="pipe" style="left:116px;top:576px;background:#adff2f;opacity:0.75"></div>
<div class="pipe" style="left:122px;top:576px;background:#adff2f;opacity:0.75"></div>
<div class="pipe" style="left:128px;top:576px;background:#adff2f;opacity:0.75"></div>
<div class="lab" style="left:252.2px;top:575px;color:#adff2f;letter-spacing:0.3px">962</div>
<div class="lab" style="left:17px;top:595px;color:#adff2f">4:</div>
<div class="pipe" style="left:44px;top:596px;background:#adff2f;opacity:0.75"></div>
<div class="pipe" style="left:50px;top:596px;background:#adff2f;opacity:0.75"></div>
<div class="pipe" style="left:56px;top:596px;background:#adff2f;opacity:0.75"></div>
<div class="pipe" style="left:62px;top:596px;background:#adff2f;opacity:0.75"></div>
<div class="pipe" style="left:68px;top:596px;background:#adff2f;opacity:0.75"></div>
<div class="pipe" style="left:74px;top:596px;background:#adff2f;opacity:0.75"></div>
<div class="pipe" style="left:80px;top:596px;background:#adff2f;opacity:0.75"></div>
<div class="pipe" style="left:86px;top:596px;background:#adff2f;opacity:0.75"></div>
<div class="pipe" style="left:92px;top:596px;background:#adff2f;opacity:0.75"></div>
<div class="pipe" style="left:98px;top:596px;background:#adff2f;opacity:0.75"></div>
<div class="pipe" style="left:104px;top:596px;background:#adff2f;opacity:0.75"></div>
<div class="pipe" style="left:110px;top:596px;background:#adff2f;opacity:0.75"></div>
<div class="pipe" style="left:116px;top:596px;background:#adff2f;opacity:0.75"></div>
<div class="pipe" style="left:122px;top:596px;background:#adff2f;opacity:0.75"></div>
<div class="pipe" style="left:128px;top:596px;background:#adff2f;opacity:0.75"></div>
<div class="lab" style="left:252.2px;top:595px;color:#adff2f;letter-spacing:0.3px">864</div>
<div class="lab" style="left:17px;top:615px;color:#adff2f">3:</div>
<div class="pipe" style="left:44px;top:616px;background:#adff2f;opacity:0.75"></div>
<div class="pipe" style="left:50px;top:616px;background:#adff2f;opacity:0.75"></div>
<div class="pipe" style="left:56px;top:616px;background:#adff2f;opacity:0.75"></div>
<div class="pipe" style="left:62px;top:616px;background:#adff2f;opacity:0.75"></div>
<div class="pipe" style="left:68px;top:616px;background:#adff2f;opacity:0.75"></div>
<div class="pipe" style="left:74px;top:616px;background:#adff2f;opacity:0.75"></div>
<div class="pipe" style="left:80px;top:616px;background:#adff2f;opacity:0.75"></div>
<div class="pipe" style="left:86px;top:616px;background:#adff2f;opacity:0.75"></div>
<div class="pipe" style="left:92px;top:616px;background:#adff2f;opacity:0.75"></div>
<div class="pipe" style="left:98px;top:616px;background:#adff2f;opacity:0.75"></div>
<div class="pipe" style="left:104px;top:616px;background:#adff2f;opacity:0.75"></div>
<div class="pipe" style="left:110px;top:616px;background:#adff2f;opacity:0.75"></div>
<div class="pipe" style="left:116px;top:616px;background:#adff2f;opacity:0.75"></div>
<div class="pipe" style="left:122px;top:616px;background:#adff2f;opacity:0.75"></div>
<div class="pipe" style="left:128px;top:616px;background:#adff2f;opacity:0.75"></div>
<div class="lab" style="left:252.0px;top:615px;color:#adff2f;letter-spacing:0.3px">1242</div>
<div class="lab" style="left:17px;top:635px;color:#adff2f">2:</div>
<div class="pipe" style="left:44px;top:636px;background:#adff2f;opacity:0.75"></div>
<div class="pipe" style="left:50px;top:636px;background:#adff2f;opacity:0.75"></div>
<div class="pipe" style="left:56px;top:636px;background:#adff2f;opacity:0.75"></div>
<div class="pipe" style="left:62px;top:636px;background:#adff2f;opacity:0.75"></div>
<div class="pipe" style="left:68px;top:636px;background:#adff2f;opacity:0.75"></div>
<div class="pipe" style="left:74px;top:636px;background:#adff2f;opacity:0.75"></div>
<div class="pipe" style="left:80px;top:636px;background:#adff2f;opacity:0.75"></div>
<div class="pipe" style="left:86px;top:636px;background:#adff2f;opacity:0.75"></div>
<div class="pipe" style="left:92px;top:636px;background:#adff2f;opacity:0.75"></div>
<div class="pipe" style="left:98px;top:636px;background:#adff2f;opacity:0.75"></div>
<div class="pipe" style="left:104px;top:636px;background:#adff2f;opacity:0.75"></div>
<div class="pipe" style="left:110px;top:636px;background:#adff2f;opacity:0.75"></div>
<div class="pipe" style="left:116px;top:636px;background:#adff2f;opacity:0.75"></div>
<div class="pipe" style="left:122px;top:636px;background:#adff2f;opacity:0.75"></div>
<div class="pipe" style="left:128px;top:636px;background:#adff2f;opacity:0.75"></div>
<div class="lab" style="left:252.0px;top:635px;color:#adff2f;letter-spacing:0.3px">1035</div>
<div class="lab" style="left:17px;top:655px;color:#adff2f">1:</div>
<div class="pipe" style="left:44px;top:656px;background:#adff2f;opacity:0.75"></div>
<div class="pipe" style="left:50px;top:656px;background:#adff2f;opacity:0.75"></div>
<div class="pipe" style="left:56px;top:656px;background:#adff2f;opacity:0.75"></div>
<div class="pipe" style="left:62px;top:656px;background:#adff2f;opacity:0.75"></div>
<div class="pipe" style="left:68px;top:656px;background:#adff2f;opacity:0.75"></div>
<div class="pipe" style="left:74px;top:656px;background:#adff2f;opacity:0.75"></div>
<div class="pipe" style="left:80px;top:656px;background:#adff2f;opacity:0.75"></div>
<div class="pipe" style="left:86px;top:656px;background:#adff2f;opacity:0.75"></div>
<div class="pipe" style="left:92px;top:656px;background:#adff2f;opacity:0.75"></div>
<div class="pipe" style="left:98px;top:656px;background:#adff2f;opacity:0.75"></div>
<div class="pipe" style="left:104px;top:656px;background:#adff2f;opacity:0.75"></div>
<div class="pipe" style="left:110px;top:656px;background:#adff2f;opacity:0.75"></div>
<div class="lab" style="left:254.2px;top:655px;color:#adff2f;letter-spacing:0.3px">780</div>
<div class="lab" style="left:17px;top:675px;color:#32cd32">0:</div>
<div class="pipe" style="left:44px;top:676px;background:#32cd32;opacity:0.75"></div>
<div class="pipe" style="left:50px;top:676px;background:#32cd32;opacity:0.75"></div>
<div class="pipe" style="left:56px;top:676px;background:#32cd32;opacity:0.75"></div>
<div class="lab" style="left:261.2px;top:675px;color:#32cd32;letter-spacing:0.3px">10</div>
<div class="a" style="left:12px;top:543px;width:258px;height:2px;background:repeating-linear-gradient(90deg,#009800 0 5px,#002800 5px 6px)"></div>

<div class="a" style="left:6px;top:297px;width:777px;height:1px;background:#778899"></div>
<svg class="a" style="left:0;top:0" width="783" height="782"><path d="M6.5 592V613M8.5 590V601M10.5 595V607M12.5 597V610M14.5 595V613M16.5 601V614M18.5 600V612M20.5 603V611M22.5 613V634M24.5 628V639M26.5 627V639M28.5 630V639M30.5 627V641M32.5 635V650M34.5 634V644M36.5 628V641M38.5 616V635M40.5 621V650M42.5 626V644M44.5 637V655M46.5 641V673M48.5 657V676M50.5 677V705M52.5 680V709M54.5 677V712M56.5 696V716M58.5 687V718M60.5 689V705M62.5 694V709M64.5 682V716M66.5 671V689M68.5 651V689M70.5 641V651M72.5 623V647M74.5 628V639M76.5 619V640M78.5 597V623M80.5 608V621M82.5 617V640M84.5 613V635M86.5 608V622M88.5 610V622M90.5 613V621M92.5 615V631M94.5 619V646M96.5 624V646M98.5 616V640M100.5 617V628M102.5 608V631M104.5 626V649M106.5 630V649M108.5 621V639M110.5 615V637M112.5 619V626M114.5 611V617M116.5 593V613M118.5 596V619M120.5 613V624M122.5 610V619M124.5 608V615M126.5 604V613M128.5 604V617M130.5 603V613M132.5 604V622M134.5 586V619M136.5 577V612M138.5 577V615M140.5 571V600M142.5 566V594M144.5 580V605M146.5 592V605M148.5 563V595M150.5 558V569M152.5 561V569M154.5 540V565M156.5 537V553M158.5 538V569M160.5 543V560M162.5 537V558M164.5 529V559M166.5 530V544M168.5 520V537M170.5 525V551M172.5 542V564M174.5 558V585M176.5 544V570M178.5 518V543M180.5 509V523M182.5 502V513M184.5 498V513M186.5 494V510M188.5 489V501M190.5 482V499M192.5 456V488M194.5 454V490M196.5 447V479M198.5 447V466M200.5 443V463M202.5 443V456M204.5 446V461M206.5 434V450M208.5 422V444M210.5 392V426M212.5 379V400M214.5 374V424M216.5 413V444M218.5 421V433M220.5 417V435M222.5 411V426M224.5 349V412M226.5 358V380M228.5 376V399M230.5 385V419M232.5 396V403M234.5 346V406M236.5 339V373M238.5 338V364M240.5 344V365M242.5 345V372M244.5 356V382M246.5 353V378M248.5 351V364M250.5 289V362M252.5 252V292M254.5 237V274M256.5 243V279M258.5 239V279M260.5 250V281M262.5 245V261M264.5 250V283M266.5 263V275M268.5 272V314M270.5 292V335M272.5 302V356M274.5 309V366M276.5 292V328M278.5 272V348M280.5 263V286M282.5 272V286M284.5 219V274M286.5 220V265M288.5 221V284M290.5 272V331M292.5 242V324M294.5 204V249M296.5 187V220M298.5 196V219M300.5 174V219M302.5 171V191M304.5 176V224M306.5 179V263M308.5 259V286M310.5 219V258M312.5 199V241M314.5 219V260M588.5 123V128M590.5 124V128M702.5 117V128M704.5 98V123M706.5 106V128M708.5 124V128M710.5 120V128M712.5 126V128" stroke="#00ff00" stroke-width="1" fill="none"/></svg>

<!-- ===== terminal header ===== -->
<div class="a" style="left:0;top:763px;width:783px;height:1px;background:#a0a0a0"></div>
<div class="a" style="left:0;top:764px;width:783px;height:18px;background:#fff"></div>
<div class="hd" style="left:34.8px">Время</div><div class="csep" style="left:85px"></div>
<div class="hd" style="left:184px">Тип</div><div class="csep" style="left:215px"></div>
<div class="hd" style="left:262px">Объем</div><div class="csep" style="left:316px"></div>
<div class="hd" style="left:386px">Символ</div><div class="csep" style="left:446px"></div>
<div class="hd" style="left:548.8px">Цена</div><div class="csep" style="left:591px"></div>
<div class="hd" style="left:699px;letter-spacing:-0.2px">S / L</div><div class="csep" style="left:734px"></div>

<!-- ===== dialog ===== -->
<div class="a" style="left:315px;top:128px;width:468px;height:614px;background:#f0f0f0"></div>
<div class="a" style="left:315px;top:128px;width:468px;height:37px;background:#fff"></div>
<div class="a" style="left:324px;top:139px;letter-spacing:0;font-size:14.85px;line-height:17px;color:#000;white-space:pre">Expert - TickMeter2</div>
<!-- tabs -->
<div class="a" style="left:323px;top:196px;width:470px;height:501px;background:#fff;border:1px solid #d9d9d9"></div>
<div class="a" style="left:325px;top:175px;width:97px;height:22px;background:#f0f0f0;border:1px solid #d9d9d9;border-bottom:none"></div>
<div class="a" style="left:421px;top:175px;width:55px;height:22px;background:#f0f0f0;border:1px solid #d9d9d9;border-bottom:none"></div>
<div class="a" style="left:475px;top:173px;width:148px;height:25px;background:#fff;border:1px solid #d9d9d9;border-bottom:none"></div>
<div class="dt" style="left:331px;top:179px;letter-spacing:0.6px">О программе</div>
<div class="dt" style="left:428px;top:179px">Общие</div>
<div class="dt" style="left:483px;top:177px;letter-spacing:0.6px">Входные параметры</div>
<!-- list -->
<div class="a" style="left:335px;top:206px;width:460px;height:482px;border:1px solid #828790;background:#fff"></div>
<div class="dt" style="left:343px;top:213px;letter-spacing:0.8px">Переменная</div>
<div class="a" style="left:754px;top:208px;width:1px;height:24px;background:#e5e5e5"></div>
<div class="dt" style="left:761px;top:213px">Зна</div>
<div class="a" style="left:336px;top:257px;width:447px;height:25px;background:#ebebeb"></div>
<div class="a" style="left:337px;top:256px;width:446px;height:1px;background:#d4d4d4"></div>
<div class="a" style="left:337px;top:281px;width:446px;height:1px;background:#d4d4d4"></div>
<div class="a" style="left:337px;top:306px;width:446px;height:1px;background:#d4d4d4"></div>
<div class="a" style="left:754px;top:232px;width:1px;height:75px;background:#d4d4d4"></div>
<svg class="a" style="left:338px;top:235px" width="22" height="21" viewBox="0 0 22 21"><defs><linearGradient id="ig235" x1="0" y1="0" x2="0" y2="1"><stop offset="0" stop-color="#cfe5f8"/><stop offset="1" stop-color="#78aee6"/></linearGradient></defs><path d="M1 2.5 Q1 0.8 2.8 0.8 H16.5 L20 4.3 V17.5 L18.5 19.3 L16.5 17.8 L14 19.3 L11.5 17.8 L9 19.3 L6.5 17.8 L4 19.3 L1 17.8 Z" fill="url(#ig235)" stroke="#5b8fcf" stroke-width="1"/><path d="M16.5 0.8 V4.3 H20" fill="#e6f1fc" stroke="#5b8fcf" stroke-width="0.8"/><text x="2.6" y="12.8" font-family="Liberation Sans" font-weight="bold" font-size="8.6" textLength="13.5" lengthAdjust="spacingAndGlyphs" fill="#0c1f45">123</text></svg><svg class="a" style="left:338px;top:260px" width="22" height="21" viewBox="0 0 22 21"><defs><linearGradient id="ig260" x1="0" y1="0" x2="0" y2="1"><stop offset="0" stop-color="#cfe5f8"/><stop offset="1" stop-color="#78aee6"/></linearGradient></defs><path d="M1 2.5 Q1 0.8 2.8 0.8 H16.5 L20 4.3 V17.5 L18.5 19.3 L16.5 17.8 L14 19.3 L11.5 17.8 L9 19.3 L6.5 17.8 L4 19.3 L1 17.8 Z" fill="url(#ig260)" stroke="#5b8fcf" stroke-width="1"/><path d="M16.5 0.8 V4.3 H20" fill="#e6f1fc" stroke="#5b8fcf" stroke-width="0.8"/><text x="2.6" y="12.8" font-family="Liberation Sans" font-weight="bold" font-size="8.6" textLength="13.5" lengthAdjust="spacingAndGlyphs" fill="#0c1f45">123</text></svg><svg class="a" style="left:338px;top:284px" width="22" height="21" viewBox="0 0 22 21"><defs><linearGradient id="ig284" x1="0" y1="0" x2="0" y2="1"><stop offset="0" stop-color="#cfe5f8"/><stop offset="1" stop-color="#78aee6"/></linearGradient></defs><path d="M1 2.5 Q1 0.8 2.8 0.8 H16.5 L20 4.3 V17.5 L18.5 19.3 L16.5 17.8 L14 19.3 L11.5 17.8 L9 19.3 L6.5 17.8 L4 19.3 L1 17.8 Z" fill="url(#ig284)" stroke="#5b8fcf" stroke-width="1"/><path d="M16.5 0.8 V4.3 H20" fill="#e6f1fc" stroke="#5b8fcf" stroke-width="0.8"/><text x="2.6" y="12.8" font-family="Liberation Sans" font-weight="bold" font-size="8.6" textLength="13.5" lengthAdjust="spacingAndGlyphs" fill="#0c1f45">123</text></svg>
<div class="dt" style="left:364px;top:237px;letter-spacing:0.65px">Угол вывода надписи</div>
<div class="dt" style="left:364px;top:262px;letter-spacing:0.55px">Стабилизация объемов</div>
<div class="dt" style="left:364px;top:286px;letter-spacing:0.58px">Шаг тика (чувствительность колебаний - Платно)</div>
<div class="dt" style="left:759px;top:237px">2</div>
<div class="dt" style="left:759px;top:262px">5</div>
<div class="dt" style="left:759px;top:286px">8</div>

</body></html>
